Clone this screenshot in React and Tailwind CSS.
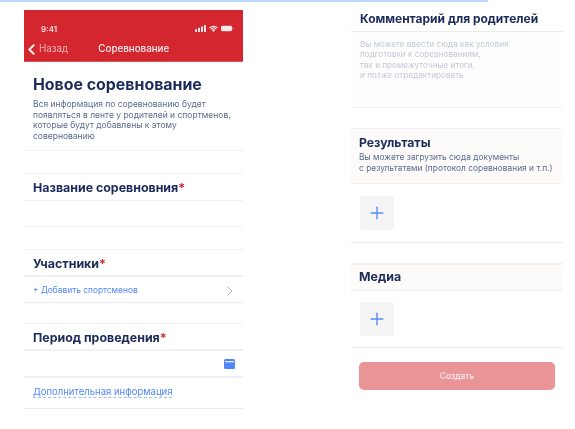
import { ChevronLeft, ChevronRight, Plus } from 'lucide-react'

const Required = () => <span className="text-[#d3262f]">*</span>

function SectionTitle({ children, required, className = '' }) {
  return (
    <div className={`flex items-center px-[9px] text-[12.4px] font-bold leading-none text-[#1c2b5a] ${className}`}>
      <span>
        {children}
        {required && <Required />}
      </span>
    </div>
  )
}

function StatusIcons() {
  return (
    <svg width="40" height="9" viewBox="0 0 40 9" fill="#fde8e8">
      <rect x="0" y="5" width="2" height="3" rx="0.4" />
      <rect x="3" y="3.8" width="2" height="4.2" rx="0.4" />
      <rect x="6" y="2.4" width="2" height="5.6" rx="0.4" />
      <rect x="9" y="1" width="2" height="7" rx="0.4" />
      <path d="M18.5 8 L16.7 6.1 a2.6 2.6 0 0 1 3.6 0 Z" />
      <path d="M14.5 3.9 a5.8 5.8 0 0 1 8 0" fill="none" stroke="#fde8e8" strokeWidth="1.2" />
      <path d="M15.7 5.2 a4 4 0 0 1 5.6 0" fill="none" stroke="#fde8e8" strokeWidth="1.1" />
      <rect x="26" y="1.8" width="11" height="5.4" rx="1.4" />
      <rect x="37.5" y="3.5" width="1" height="2" rx="0.4" opacity="0.6" />
    </svg>
  )
}

function AddTile() {
  return (
    <div className="flex h-[34px] w-[34px] items-center justify-center rounded-[3px] bg-[#f4f4f4]">
      <Plus size={20} strokeWidth={1.7} className="text-[#5b8dfa]" />
    </div>
  )
}

function LeftColumn() {
  return (
    <div className="flex w-[219px] flex-col">
      <div className="flex h-[52px] flex-col border-b border-[#e2545c] bg-[#d3262f] text-[#fbe3e3]">
        <div className="flex h-[27px] items-end justify-between pb-[1px] pl-[17px] pr-[8px]">
          <span className="text-[8px] font-semibold leading-[14px]">9:41</span>
          <span className="mb-[3px]"><StatusIcons /></span>
        </div>
        <div className="relative flex h-[24px] items-center">
          <ChevronLeft size={17} strokeWidth={2.8} className="-ml-[1px] text-[#fdeeee]" />
          <span className="-ml-[1px] text-[9.8px] text-[#f2b4b6]">Назад</span>
          <span className="ml-[30px] text-[9.8px] font-medium text-[#fdeeee]">Соревнование</span>
        </div>
      </div>

      <div className="h-[89px] border-b border-[#f0f0f0] px-[9px] pt-[12px]">
        <h1 className="text-[15.9px] font-bold leading-[21px] text-[#1c2b5a]">Новое соревнование</h1>
        <p className="mt-[4px] text-[8.5px] leading-[10.7px] text-[#5a6a8e]">
          Вся информация по соревнованию будет
          <br />
          появляться в ленте у родителей и спортменов,
          <br />
          которые будут добавлены к этому
          <br />
          совернованию
        </p>
      </div>

      <div className="h-[22px]" />
      <SectionTitle required className="h-[28px] border-y border-[#f0f0f0] pt-[2px]">Название соревновния</SectionTitle>
      <div className="h-[26px] border-b border-[#f0f0f0]" />
      <div className="h-[22px]" />
      <SectionTitle required className="h-[28px] border-t border-b-2 border-[#f0f0f0] pt-[3px]">Участники</SectionTitle>
      <div className="flex h-[26px] items-center justify-between border-b border-[#ececec] pl-[9px] pr-[5px] pt-[2px]">
        <span className="text-[8.4px] text-[#4f86f7]">+ Добавить спортсменов</span>
        <ChevronRight size={16} strokeWidth={1.5} className="text-[#aab0c0]" />
      </div>
      <div className="h-[20px]" />
      <SectionTitle required className="h-[28px] border-t border-b-2 border-[#f0f0f0] pt-[4px]">Период проведения</SectionTitle>
      <div className="flex h-[27px] items-center justify-end border-b-2 border-[#f0f0f0] pr-[8px]">
        <svg width="11" height="10" viewBox="0 0 11 10">
          <rect width="11" height="10" rx="1.5" fill="#4f86f7" />
          <rect x="1" y="2" width="9" height="1.3" fill="#e4edff" />
        </svg>
      </div>
      <div className="flex h-[31px] items-center border-b border-[#ececec] px-[9px] pb-[2px]">
        <span className="border-b border-dashed border-[#9dbcfa] text-[9.5px] leading-[11px] text-[#4f86f7]">
          Дополнительная информация
        </span>
      </div>
    </div>
  )
}

function RightColumn() {
  return (
    <div className="flex w-[212px] flex-col">
      <SectionTitle className="h-[32px] border-b border-[#ececec] pt-[7px]">
        <span className="text-[12px]">Комментарий для родителей</span>
      </SectionTitle>
      <div className="h-[76px] border-b border-[#f0f0f0] bg-[#fefefe] px-[9px] pt-[7px] text-[8.2px] leading-[10.4px] text-[#c3c8d6]">
        Вы можете ввести сюда как условия
        <br />
        подготовки к соревнованиям,
        <br />
        так и промежуточные итоги,
        <br />
        и позже отредактировать
      </div>
      <div className="h-[20px]" />
      <div className="h-[56px] border-y border-[#f3f2f1] bg-[#fcfbfa] px-[8px] pt-[6px]">
        <div className="text-[12.2px] font-bold leading-[15px] text-[#1c2b5a]">Результаты</div>
        <p className="mt-[2px] text-[8.4px] leading-[10.5px] text-[#5a6a8e]">
          Вы можете загрузить сюда документы
          <br />
          с результатами (протокол соревнования и т.п.)
        </p>
      </div>
      <div className="h-[59px] border-b border-[#ececec] pl-[9px] pt-[12px]">
        <AddTile />
      </div>
      <div className="h-[20px]" />
      <SectionTitle className="h-[28px] border-y-2 border-[#f3f2f1] bg-[#fcfbfa] !px-[8px]">
        <span>Медиа</span>
      </SectionTitle>
      <div className="h-[57px] border-b border-[#ececec] pl-[9px] pt-[11px]">
        <AddTile />
      </div>
      <div className="ml-[8px] mt-[14px] flex h-[28px] w-[196px] items-center justify-center rounded-[5px] bg-[#e99496] text-[8.4px] font-medium text-[#fdf1f1]">
        Создать
      </div>
    </div>
  )
}

export default function App() {
  return (
    <div className="h-[429px] w-[575px] overflow-hidden bg-white font-['Inter',sans-serif] blur-[0.35px]">
      <div className="h-[2px] w-[488px] bg-[#bdd6fb]" />
      <div className="flex pl-[24px] pt-[8px]">
        <LeftColumn />
        <div className="ml-[108px] -mt-[10px]">
          <RightColumn />
        </div>
      </div>
    </div>
  )
}
